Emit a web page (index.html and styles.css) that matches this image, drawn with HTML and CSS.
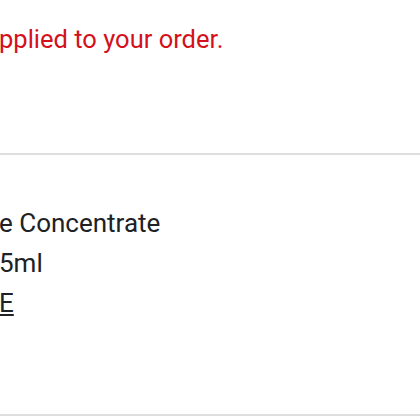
FILE: index.html
```html
<!DOCTYPE html>
<html>
<head>
<meta charset="utf-8">
<link rel="stylesheet" href="styles.css">
</head>
<body>
<div class="page">
  <section class="notice">
    <p class="notice-text"><span class="cut">Discount a</span>pplied to your order.</p>
  </section>
  <section class="item">
    <p class="item-name"><span class="cut">Juic</span>e Concentrate</p>
    <p class="item-size"><span class="cut">7</span>5ml</p>
    <p class="item-remove"><a class="remove-link" href="#"><span class="cut">REMOV</span>E</a></p>
  </section>
</div>
</body>
</html>
```
FILE: styles.css
```css
html, body {
  margin: 0;
  padding: 0;
  background: #fff;
  overflow: hidden;
}
.page {
  width: 420px;
  height: 420px;
  overflow: hidden;
  font-family: Roboto, "Liberation Sans", sans-serif;
}
.notice {
  height: 155px;
  border-bottom: 2px solid #dedede;
  box-sizing: border-box;
  padding-top: 25px;
}
.notice-text {
  margin: 0 0 0 -1px;
  color: #d3111c;
  font-size: 25.5px;
  line-height: 28px;
  white-space: nowrap;
}
.item {
  height: 261px;
  border-bottom: 2px solid #dedede;
  box-sizing: border-box;
  padding-top: 48px;
}
.item p {
  margin: 0 0 0 -1px;
  font-size: 26px;
  line-height: 40px;
  color: #202124;
  white-space: nowrap;
}
.cut {
  display: inline-block;
  width: 0;
  direction: rtl;
  white-space: nowrap;
}
.remove-link {
  color: #202124;
  text-decoration: underline;
}
```
